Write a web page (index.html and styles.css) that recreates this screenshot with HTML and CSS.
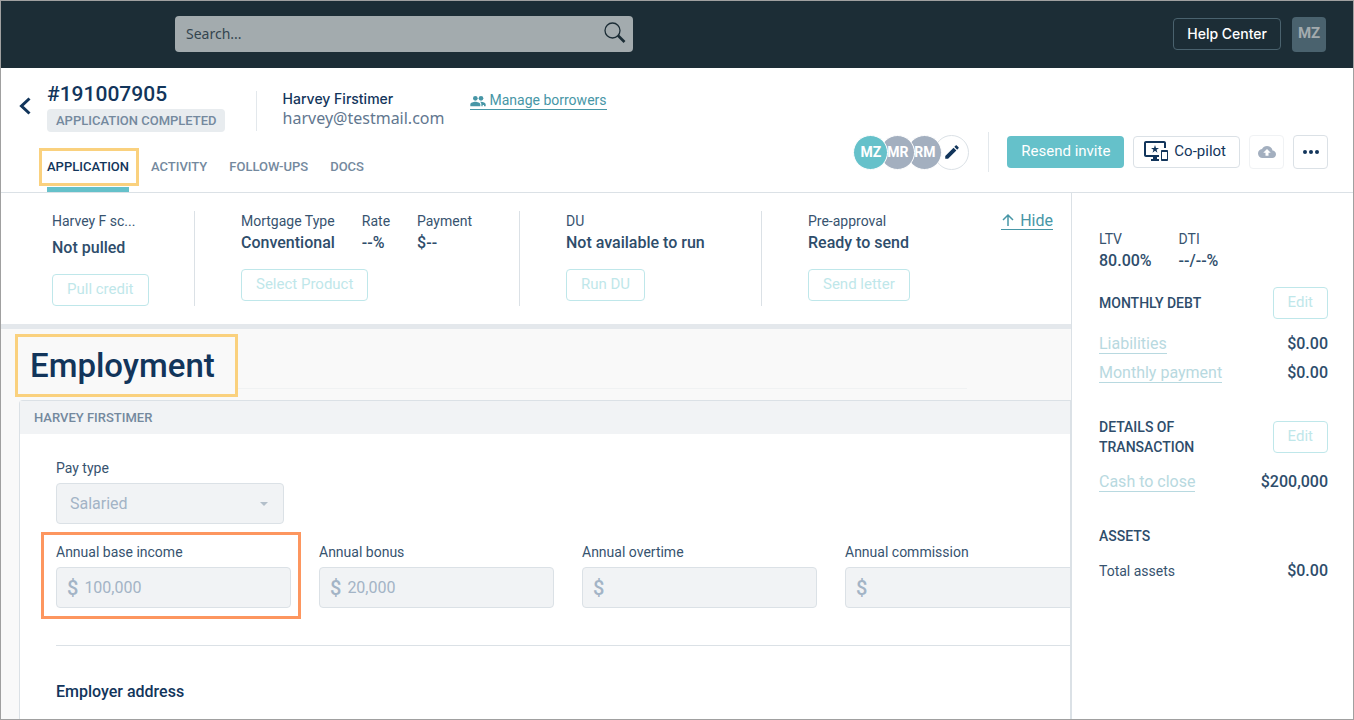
FILE: index.html
```
<!DOCTYPE html>
<html lang="en">
<head>
  <meta charset="UTF-8">
  <meta name="viewport" content="width=device-width, initial-scale=1.0">
  <title>Loan #191007905 - Employment</title>
  <link rel="stylesheet" href="styles.css">
</head>
<body>

  <header class="topbar">
    <form class="search">
      <input type="text" placeholder="Search..." aria-label="Search">
      <button type="button" aria-label="Search">
        <svg width="22" height="22" viewBox="0 0 22 22" fill="none" stroke="#1c2d36">
          <circle cx="8.5" cy="8.5" r="7.5" stroke-width="1.3"/>
          <path d="M14 13.5L20.5 20" stroke-width="2.6"/>
        </svg>
      </button>
    </form>
    <div class="topbar-right">
      <button class="help-btn">Help Center</button>
      <button class="user-btn">MZ</button>
    </div>
  </header>

  <section class="loan-header">
    <div class="loan-left">
      <div class="loan-row">
        <a href="#" class="back" aria-label="Back">
          <svg width="12" height="18" viewBox="0 0 12 18" fill="none" stroke="#12355b" stroke-width="3">
            <path d="M10.5 1.5L2.5 9l8 7.5"/>
          </svg>
        </a>
        <div class="loan-id">
          <h1>#191007905</h1>
          <span class="badge">APPLICATION COMPLETED</span>
        </div>
        <div class="contact">
          <div class="contact-name">Harvey Firstimer</div>
          <div class="contact-email">harvey@testmail.com</div>
        </div>
        <a href="#" class="manage">
          <svg width="16" height="16" viewBox="0 0 24 24" fill="#4796a6">
            <circle cx="8" cy="8" r="3.5"/>
            <circle cx="16.5" cy="8" r="3.5"/>
            <path d="M0.5 20v-3c0-2.600 4.500-4 7.500-4s7.500 1.400 7.500 4v3zM17 20v-3c0-1.500-.7-2.800-2-3.800 3.500-.5 8.500.9 8.500 3.800v3h-2.500v-2h-2v2z"/>
          </svg>
          Manage borrowers
        </a>
      </div>
      <nav class="tabs">
        <a href="#" class="active">APPLICATION</a>
        <a href="#">ACTIVITY</a>
        <a href="#">FOLLOW-UPS</a>
        <a href="#">DOCS</a>
      </nav>
    </div>
    <div class="actions">
      <div class="avatars">
        <span class="avatar avatar-main">MZ</span>
        <span class="avatar">MR</span>
        <span class="avatar">RM</span>
        <button class="avatar avatar-edit" aria-label="Edit team">
          <svg width="18" height="18" viewBox="0 0 24 24" fill="#12355b">
            <path d="M3 17.250V21h3.750L17.810 9.940l-3.750-3.750L3 17.250zM20.710 7.040c.39-.39.39-1.020 0-1.410l-2.340-2.340c-.39-.39-1.020-.39-1.410 0l-1.830 1.830 3.750 3.750 1.830-1.830z"/>
          </svg>
        </button>
      </div>
      <div class="action-buttons">
        <button class="btn-primary">Resend invite</button>
        <button class="btn-copilot">
          <svg width="24" height="22" viewBox="0 1 24 22" fill="#12355b">
            <path d="M23 11.010L18 11c-.55 0-1 .45-1 1v9c0 .55.45 1 1 1h5c.55 0 1-.45 1-1v-9c0-.55-.45-.99-1-.99zM23 20h-5v-7h5v7zM20 2H2C.89 2 0 2.890 0 4v12c0 1.100.89 2 2 2h7v2H7v2h8v-2h-2v-2h2v-2H2V4h18v5h2V4c0-1.110-.9-2-2-2zm-8.030 7L11 6l-.97 3H7l2.470 1.760-.94 2.910 2.470-1.800 2.470 1.800-.94-2.910L15 9h-3.030z"/>
          </svg>
          Co-pilot
        </button>
        <button class="btn-icon btn-faded" aria-label="Upload">
          <svg width="18" height="18" viewBox="0 0 24 24" fill="#a3afbf">
            <path d="M19.350 10.040C18.670 6.590 15.640 4 12 4 9.110 4 6.600 5.640 5.350 8.040 2.340 8.360 0 10.910 0 14c0 3.310 2.690 6 6 6h13c2.760 0 5-2.240 5-5 0-2.640-2.050-4.780-4.650-4.960zM14 13v4h-4v-4H7l5-5 5 5h-3z"/>
          </svg>
        </button>
        <button class="btn-icon" aria-label="More">
          <svg width="16" height="4" viewBox="0 0 16 4" fill="#12355b">
            <circle cx="2" cy="2" r="2"/>
            <circle cx="8" cy="2" r="2"/>
            <circle cx="14" cy="2" r="2"/>
          </svg>
        </button>
      </div>
    </div>
  </section>

  <div class="layout">
    <main class="main">
      <section class="stats">
        <div class="stat stat-credit">
          <div class="label">Harvey F sc...</div>
          <div class="value">Not pulled</div>
          <button class="btn-ghost">Pull credit</button>
        </div>
        <div class="stat">
          <div class="stat-group">
            <div>
              <div class="label">Mortgage Type</div>
              <div class="value">Conventional</div>
            </div>
            <div>
              <div class="label">Rate</div>
              <div class="value">--%</div>
            </div>
            <div>
              <div class="label">Payment</div>
              <div class="value">$--</div>
            </div>
          </div>
          <button class="btn-ghost">Select Product</button>
        </div>
        <div class="stat">
          <div class="label">DU</div>
          <div class="value">Not available to run</div>
          <button class="btn-ghost">Run DU</button>
        </div>
        <div class="stat stat-last">
          <div>
            <div class="label">Pre-approval</div>
            <div class="value">Ready to send</div>
            <button class="btn-ghost">Send letter</button>
          </div>
          <a href="#" class="hide-link">
            <svg width="14" height="14" viewBox="0 0 14 14" fill="none" stroke="#4796a6" stroke-width="1.500">
              <path d="M7 13V2M2 7l5-5 5 5"/>
            </svg>
            Hide
          </a>
        </div>
      </section>

      <div class="title-row">
        <h2>Employment</h2>
      </div>

      <section class="card">
        <h3 class="card-header">HARVEY FIRSTIMER</h3>
        <div class="card-body">
          <div class="field field-select">
            <label for="payType">Pay type</label>
            <div class="control">
              <select id="payType" disabled>
                <option>Salaried</option>
              </select>
              <svg class="caret" width="8" height="4" viewBox="0 0 8 4" fill="#b3bfca">
                <path d="M0 0h8L4 4z"/>
              </svg>
            </div>
          </div>
          <div class="fields">
            <div class="field highlight">
              <label for="baseIncome">Annual base income</label>
              <div class="control"><span>$</span><input type="text" id="baseIncome" value="100,000" disabled></div>
            </div>
            <div class="field">
              <label for="bonus">Annual bonus</label>
              <div class="control"><span>$</span><input type="text" id="bonus" value="20,000" disabled></div>
            </div>
            <div class="field">
              <label for="overtime">Annual overtime</label>
              <div class="control"><span>$</span><input type="text" id="overtime" disabled></div>
            </div>
            <div class="field">
              <label for="commission">Annual commission</label>
              <div class="control"><span>$</span><input type="text" id="commission" disabled></div>
            </div>
          </div>
          <h4>Employer address</h4>
        </div>
      </section>
    </main>

    <aside class="sidebar">
      <div class="ratios">
        <div>
          <div class="label">LTV</div>
          <div class="value">80.00%</div>
        </div>
        <div>
          <div class="label">DTI</div>
          <div class="value">--/--%</div>
        </div>
      </div>
      <section>
        <div class="side-head">
          <h3>MONTHLY DEBT</h3>
          <button class="btn-ghost">Edit</button>
        </div>
        <div class="side-row">
          <a href="#">Liabilities</a>
          <span class="value">$0.00</span>
        </div>
        <div class="side-row">
          <a href="#">Monthly payment</a>
          <span class="value">$0.00</span>
        </div>
      </section>
      <section>
        <div class="side-head">
          <h3>DETAILS OF TRANSACTION</h3>
          <button class="btn-ghost">Edit</button>
        </div>
        <div class="side-row">
          <a href="#">Cash to close</a>
          <span class="value">$200,000</span>
        </div>
      </section>
      <section>
        <div class="side-head">
          <h3>ASSETS</h3>
        </div>
        <div class="side-row">
          <span class="label">Total assets</span>
          <span class="value">$0.00</span>
        </div>
      </section>
    </aside>
  </div>

</body>
</html>
```
FILE: styles.css
```
* {
  box-sizing: border-box;
}

body {
  display: flex;
  flex-direction: column;
  height: 100vh;
  margin: 0;
  border: 1px solid #a0a0a0;
  overflow: hidden;
  background-color: #ffffff;
  color: #12355b;
  font-family: Roboto, sans-serif;
  font-size: 15px;
}

h1, h2, h3, h4 {
  margin: 0;
  font-weight: 500;
}

a {
  color: inherit;
  text-decoration: none;
}

button, input, select {
  margin: 0;
  padding: 0;
  border: none;
  background: none;
  font: inherit;
  color: inherit;
}

button {
  display: flex;
  align-items: center;
  justify-content: center;
  border-radius: 4px;
  cursor: pointer;
}

svg {
  display: block;
  flex: none;
}

/* top bar */
.topbar {
  flex: none;
  display: flex;
  align-items: center;
  justify-content: space-between;
  padding: 15px 27px 16px 174px;
  background-color: #1c2d36;
}

.search {
  display: flex;
  align-items: center;
  width: 458px;
  height: 36px;
  padding: 0 7px 2px 11px;
  border-radius: 4px;
  background-color: #a3abae;
  color: #1c2d36;
}

.search input {
  flex: 1;
  outline: none;
  font-family: "Noto Sans", sans-serif;
  font-size: 14px;
}

.search input::placeholder {
  color: #33454f;
  opacity: 1;
}

.topbar-right {
  display: flex;
  align-items: center;
  gap: 11px;
}

.help-btn {
  height: 32px;
  padding: 0 13px 2px;
  border: 1px solid #4a626e;
  color: #ffffff;
  font-family: Inter, sans-serif;
  font-size: 14px;
  font-weight: 500;
}

.user-btn {
  width: 34px;
  height: 35px;
  padding-bottom: 2px;
  background-color: #4a626e;
  color: #a3abae;
  font-weight: 700;
}

/* loan header */
.loan-header {
  flex: none;
  display: flex;
  align-items: flex-end;
  justify-content: space-between;
  border-bottom: 1px solid #dbe1e6;
}

.loan-row {
  display: flex;
  align-items: flex-start;
  padding: 12px 0 0 18px;
}

.back {
  margin-top: 17px;
}

.loan-id {
  margin-left: 16px;
}

.loan-id h1 {
  font-size: 21px;
  line-height: 28px;
}

.badge {
  display: block;
  margin-top: 1px;
  padding: 0 8px 0 9px;
  border-radius: 4px;
  background-color: #e8ecef;
  color: #74899e;
  font-size: 13px;
  font-weight: 500;
  line-height: 23px;
}

.contact {
  height: 40px;
  margin: 11px 0 0 31px;
  padding-left: 26px;
  border-left: 1px solid #e3e8ec;
}

.contact-name {
  font-family: Inter, sans-serif;
  font-size: 14px;
  font-weight: 500;
  line-height: 16px;
}

.contact-email {
  color: #62778f;
  font-family: "Noto Sans", sans-serif;
  font-size: 16px;
  line-height: 22px;
}

.manage {
  display: flex;
  align-items: center;
  gap: 3px;
  margin: 12px 0 0 26px;
  border-bottom: 1px solid #4796a6;
  color: #4796a6;
  font-size: 14px;
  line-height: 17px;
}

.tabs {
  display: flex;
  gap: 22px;
  margin-top: 25px;
  padding-left: 46px;
  color: #74899e;
  font-size: 13px;
  font-weight: 500;
  line-height: 20px;
}

.tabs a {
  position: relative;
  padding-bottom: 10px;
  border-bottom: 5px solid transparent;
}

.tabs .active {
  border-color: #65c1ca;
  color: #12355b;
}

.tabs .active::before {
  content: "";
  position: absolute;
  inset: -9px -10px 1px -8px;
  border: 3px solid #fad17e;
}

.actions {
  display: flex;
  align-items: center;
  padding: 0 25px 20px 0;
}

.avatars {
  display: flex;
  margin-right: 19px;
}

.avatar {
  position: relative;
  display: flex;
  align-items: center;
  justify-content: center;
  width: 35px;
  height: 35px;
  margin-left: -8px;
  border: 1px solid #ffffff;
  border-radius: 50%;
  background-color: #a3afbf;
  color: #ffffff;
  font-size: 14px;
  font-weight: 700;
}

.avatar:nth-child(1) {
  z-index: 3;
}

.avatar:nth-child(2) {
  z-index: 2;
}

.avatar:nth-child(3) {
  z-index: 1;
}

.avatar-main {
  background-color: #65c1ca;
}

.avatar-edit {
  border-color: #dbe1e6;
  background-color: #ffffff;
}

.action-buttons {
  display: flex;
  align-items: center;
  gap: 9px;
  height: 40px;
  padding-left: 18px;
  border-left: 1px solid #e3e8ec;
}

.btn-primary {
  height: 32px;
  padding: 0 14px 2px;
  background-color: #65c1ca;
  color: #ffffff;
}

.btn-copilot {
  gap: 6px;
  height: 32px;
  padding: 0 13px 2px 10px;
  border: 1px solid #dbe1e6;
}

.btn-primary, .btn-copilot {
  font-size: 15px;
}

.btn-icon {
  width: 35px;
  height: 34px;
  border: 1px solid #dbe1e6;
}

.btn-faded {
  border-color: #f0f2f4;
}

.btn-ghost {
  height: 32px;
  padding: 0 14px 2px;
  border: 1px solid #bfe7ea;
  color: #bfe7ea;
  font-size: 15px;
}

/* body */
.layout {
  flex: 1;
  display: flex;
  min-height: 0;
}

.main {
  flex: 1;
  display: flex;
  flex-direction: column;
  min-width: 0;
  overflow: hidden;
  background-color: #f9f9f9;
}

.label {
  color: #37536f;
  font-size: 14px;
  line-height: 20px;
}

.value {
  color: #2e4d6b;
  font-size: 16px;
  font-weight: 500;
  line-height: 24px;
}

.stats {
  display: grid;
  grid-template-columns: 194fr 325fr 242fr 309fr;
  padding: 18px 0;
  border-bottom: 5px solid #e4e8ec;
  background-color: #ffffff;
}

.stat {
  height: 95px;
  padding-left: 46px;
  border-right: 1px solid #dbe1e6;
}

.stat .btn-ghost {
  margin-top: 14px;
}

.stat-credit {
  padding-left: 51px;
}

.stat-credit .value {
  margin: 5px 0 0;
}

.stat-group {
  display: flex;
  gap: 27px;
}

.stat-last {
  display: flex;
  justify-content: space-between;
  padding-right: 18px;
  border-right: none;
}

.hide-link {
  display: flex;
  align-items: center;
  gap: 5px;
  height: 19px;
  border-bottom: 1px solid #4796a6;
  color: #4796a6;
  font-size: 16px;
}

.title-row {
  display: flex;
  align-items: flex-end;
  padding: 5px 104px 3px 14px;
}

.title-row h2 {
  padding: 0 20px 0 12px;
  border: 3px solid #fad17e;
  font-size: 33px;
  line-height: 57px;
}

.title-row::after {
  content: "";
  flex: 1;
  height: 8px;
  border-top: 1px solid #f0f2f3;
}

.card {
  flex: 1;
  margin-left: 18px;
  border: 1px solid #dbe1e6;
  border-width: 1px 1px 0;
  border-radius: 4px 0 0;
  background-color: #ffffff;
}

.card-header {
  padding-left: 14px;
  background-color: #f1f3f5;
  color: #74899e;
  font-size: 13px;
  line-height: 33px;
}

.card-body {
  padding: 24px 0 0 36px;
  overflow: hidden;
}

.field label {
  display: block;
  margin-bottom: 5px;
  color: #37536f;
  font-size: 14px;
  line-height: 20px;
}

.field-select {
  width: 228px;
}

.control {
  display: flex;
  align-items: center;
  height: 41px;
  padding: 0 10px;
  border: 1px solid #dbe1e6;
  border-radius: 4px;
  background-color: #f1f3f5;
  color: #a3b4c6;
  font-size: 16px;
}

.control span {
  margin-right: 6px;
  font-size: 20px;
  font-weight: 500;
}

.control input, .control select {
  flex: 1;
  min-width: 0;
  color: #a3b4c6;
  opacity: 1;
}

.control select {
  padding-left: 3px;
  appearance: none;
}

.caret {
  margin-right: 5px;
}

.fields {
  display: grid;
  grid-template-columns: repeat(4, 235px);
  gap: 28px;
  padding: 18px 0 37px;
  border-bottom: 1px solid #dbe1e6;
}

.highlight {
  position: relative;
}

.highlight::before {
  content: "";
  position: absolute;
  inset: -10px -10px -11px -15px;
  border: 3px solid #fd965f;
}

.card-body h4 {
  padding-top: 36px;
  font-size: 16px;
  line-height: 20px;
}

/* sidebar */
.sidebar {
  flex: none;
  width: 282px;
  padding: 36px 25px 0 27px;
  border-left: 1px solid #dbe1e6;
}

.ratios {
  display: flex;
  gap: 27px;
  margin-bottom: 14px;
}

.sidebar section {
  margin-bottom: 30px;
}

.side-head {
  display: flex;
  align-items: center;
  justify-content: space-between;
  margin-bottom: 10px;
}

.side-head h3 {
  max-width: 140px;
  color: #2e4d6b;
  font-size: 14px;
  line-height: 20px;
}

.side-row {
  display: flex;
  align-items: center;
  justify-content: space-between;
  height: 29px;
}

.side-row a {
  border-bottom: 1px solid #b8d9e0;
  color: #b8d9e0;
  font-size: 16px;
  line-height: 19px;
}
```
